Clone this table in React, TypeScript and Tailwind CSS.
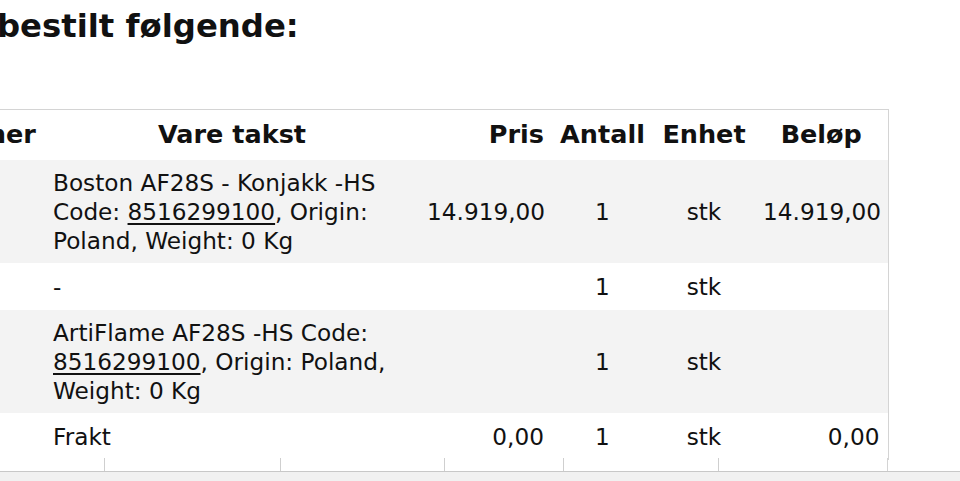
const rows = [
  {
    desc: (
      <>
        Boston AF28S - Konjakk -HS Code: <span className="underline underline-offset-[3px]">8516299100</span>, Origin: Poland, Weight: 0 Kg
      </>
    ),
    pris: "14.919,00",
    antall: "1",
    enhet: "stk",
    belop: "14.919,00",
    shade: true,
  },
  { desc: <>-</>, pris: "", antall: "1", enhet: "stk", belop: "", shade: false },
  {
    desc: (
      <>
        ArtiFlame AF28S -HS Code: <span className="underline underline-offset-[3px]">8516299100</span>, Origin: Poland, Weight: 0 Kg
      </>
    ),
    pris: "",
    antall: "1",
    enhet: "stk",
    belop: "",
    shade: true,
  },
  { desc: <>Frakt</>, pris: "0,00", antall: "1", enhet: "stk", belop: "0,00", shade: false },
];

export default function App() {
  return (
    <div className="h-[481px] w-[960px] overflow-hidden bg-white text-[#111] font-['DejaVu_Sans',Verdana,sans-serif]">
      <h1 className="-ml-[3px] pt-[6px] text-[32.3px] leading-[40px] font-bold">bestilt følgende:</h1>

      <div className="mt-[63px] -ml-[158px] w-[1046px]">
        <table className="w-[1046px] table-fixed border-collapse border-t border-r border-[#d4d4d4] text-[23.2px] leading-[29px]">
          <colgroup>
            <col className="w-[203px]" />
            <col className="w-[374px]" />
            <col className="w-[133px]" />
            <col className="w-[101px]" />
            <col className="w-[102px]" />
            <col className="w-[133px]" />
          </colgroup>
          <thead>
            <tr className="h-[50px] text-[25.5px] font-bold">
              <th className="px-2 text-center">Varenummer</th>
              <th className="px-2 text-center">Vare takst</th>
              <th className="px-2 text-right">Pris</th>
              <th className="px-2 text-center">Antall</th>
              <th className="px-2 text-center">Enhet</th>
              <th className="px-2 text-center">Beløp</th>
            </tr>
          </thead>
          <tbody>
            {rows.map((r, i) => {
              const pad = i % 2 === 0 ? "py-[8px]" : "py-[9px]";
              return (
                <tr key={i} className={r.shade ? "bg-[#f3f3f3]" : "bg-white"}>
                  <td className={`px-2 ${pad}`}></td>
                  <td className={`px-2 ${pad} align-middle`}>{r.desc}</td>
                  <td className={`px-2 ${pad} text-right`}>{r.pris}</td>
                  <td className={`px-2 ${pad} text-center`}>{r.antall}</td>
                  <td className={`px-2 ${pad} text-center`}>{r.enhet}</td>
                  <td className={`px-2 ${pad} text-right`}>{r.belop}</td>
                </tr>
              );
            })}
          </tbody>
        </table>
      </div>

      <div className="-mt-[2px] flex h-[13px] w-[888px] border-r border-[#d4d4d4]">
        <div className="w-[104px]" />
        <div className="w-[176px] border-l border-[#cfcfcf]" />
        <div className="w-[164px] border-l border-[#cfcfcf]" />
        <div className="w-[119px] border-l border-[#cfcfcf]" />
        <div className="w-[155px] border-l border-[#cfcfcf]" />
        <div className="flex-1 border-l border-[#cfcfcf]" />
      </div>
      <div className="h-[12px] border-t border-[#c8c8c8] bg-[#f1f1f1]" />
    </div>
  );
}
